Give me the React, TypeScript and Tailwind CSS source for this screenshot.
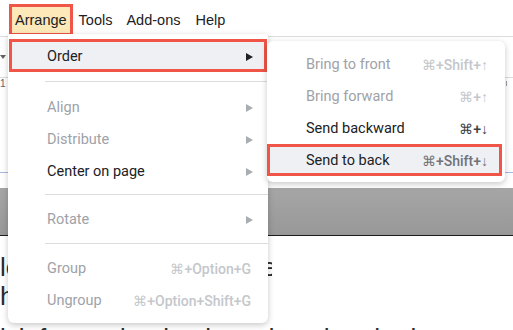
import React from "react";

const Arrow = ({ dark }: { dark?: boolean }) => (
  <svg width="7" height="8" viewBox="0 0 7 8" className="block">
    <path d="M0 0 L7 4 L0 8 Z" fill={dark ? "#202124" : "#a9adb2"} />
  </svg>
);

const Sep = ({ h, top }: { h: string; top: string }) => (
  <div className={`${h} ${top}`}>
    <div className="ml-[37px] h-px bg-[#dadce0]" />
  </div>
);

type RowProps = {
  label: string;
  right?: React.ReactNode;
  disabled?: boolean;
};

const Row = ({ label, right, disabled }: RowProps) => (
  <div className="h-[32px] pl-[39px] pr-[15px] pt-[2px] flex items-center justify-between">
    <span className={disabled ? "text-[#9ea2a8]" : "text-[#202124]"}>{label}</span>
    {right}
  </div>
);

const Sc = ({ text, color }: { text: string; color: string }) => (
  <span className={`font-medium text-[14px] mr-[2px] ${color}`}>{text}</span>
);

export default function App() {
  return (
    <div className="relative w-[513px] h-[330px] overflow-hidden bg-white font-['Liberation_Sans',Arial,sans-serif]">
      {/* menubar */}
      <div className="h-[37px] border-b border-[#dadce0] flex items-start pt-[4px] pl-[9px] text-[14.5px] text-[#202124]">
        <div className="h-[32px] border-[3px] border-[#ef5647] bg-[#fce8b8] px-[3px] pt-[1px] flex items-center">Arrange</div>
        <div className="h-[32px] ml-[6px] pt-[1px] flex items-center">Tools</div>
        <div className="h-[32px] ml-[14px] pt-[1px] flex items-center">Add-ons</div>
        <div className="h-[32px] ml-[15px] pt-[1px] flex items-center">Help</div>
      </div>
      {/* toolbar */}
      <div className="h-[41px] border-b border-[#dadce0] flex items-center">
        <svg width="6" height="4" viewBox="0 0 6 4">
          <path d="M0 0 L6 0 L3 4 Z" fill="#5f6368" />
        </svg>
      </div>
      {/* ruler */}
      <div className="h-[95px] border-b border-[#a7b7de] flex justify-between items-start">
        <span className="text-[10px] leading-[12px] text-[#5f6368]">1</span>
        <div className="w-px h-[5px] bg-[#9aa0a6] mt-[3px] mr-[6px]" />
      </div>
      <div className="h-[15px]" />
      {/* gray band */}
      <div className="h-[48px] border-b border-[#1c1c1c] bg-gradient-to-b from-[#a6a6a6] to-[#989898]" />
      {/* document text */}
      <div className="text-[26px] leading-[29px] text-[#2b2b2b] whitespace-nowrap pt-[17px]">
        <div className="flex">
          <div className="w-[262px] shrink-0 overflow-hidden">le shapes and images in the</div>
          <div className="w-[10px] shrink-0 overflow-hidden">e</div>
        </div>
        <div className="flex">
          <div className="w-[255px] shrink-0 overflow-hidden">how to move items around</div>
        </div>
        <div className="h-[40px] mt-[13px] overflow-hidden">ick forward or backward so that the button stands</div>
      </div>

      {/* main dropdown */}
      <div className="absolute left-[8px] top-[34px] w-[260px] bg-white rounded-b-[6px] rounded-t-[2px] shadow-[0_2px_6px_rgba(0,0,0,0.22)] pt-[5px] pb-[7px] font-['Roboto',sans-serif] text-[14.5px]">
        <div className="mx-[1px] h-[33px] border-[3px] border-[#ef5647] bg-[#eff0f3] flex items-center justify-between pl-[35px] pr-[11px] pt-[3px]">
          <span className="text-[#202124]">Order</span>
          <Arrow dark />
        </div>
        <Sep h="h-[19px]" top="pt-[9px]" />
        <Row label="Align" disabled right={<Arrow />} />
        <Row label="Distribute" disabled right={<Arrow />} />
        <Row label="Center on page" right={<Arrow />} />
        <Sep h="h-[16px]" top="pt-[7px]" />
        <Row label="Rotate" disabled right={<Arrow />} />
        <Sep h="h-[17px]" top="pt-[8px]" />
        <Row label="Group" disabled right={<Sc text="⌘+Option+G" color="text-[#c4c7cb]" />} />
        <Row label="Ungroup" disabled right={<Sc text="⌘+Option+Shift+G" color="text-[#c4c7cb]" />} />
      </div>

      {/* submenu */}
      <div className="absolute left-[267px] top-[41px] w-[238px] bg-white rounded-[6px] shadow-[0_2px_6px_rgba(0,0,0,0.22)] pt-[7px] pb-[6px] font-['Roboto',sans-serif] text-[14.5px]">
        <Row label="Bring to front" disabled right={<Sc text="⌘+Shift+↑" color="text-[#c4c7cb]" />} />
        <Row label="Bring forward" disabled right={<Sc text="⌘+↑" color="text-[#c4c7cb]" />} />
        <Row label="Send backward" right={<Sc text="⌘+↓" color="text-[#3c4043]" />} />
        <div className="mr-[3px] h-[32px] border-[3px] border-[#ef5647] bg-[#eff0f3] flex items-center justify-between pl-[36px] pr-[9px] pt-[2px]">
          <span className="text-[#202124]">Send to back</span>
          <Sc text="⌘+Shift+↓" color="text-[#6f7378]" />
        </div>
      </div>
    </div>
  );
}
